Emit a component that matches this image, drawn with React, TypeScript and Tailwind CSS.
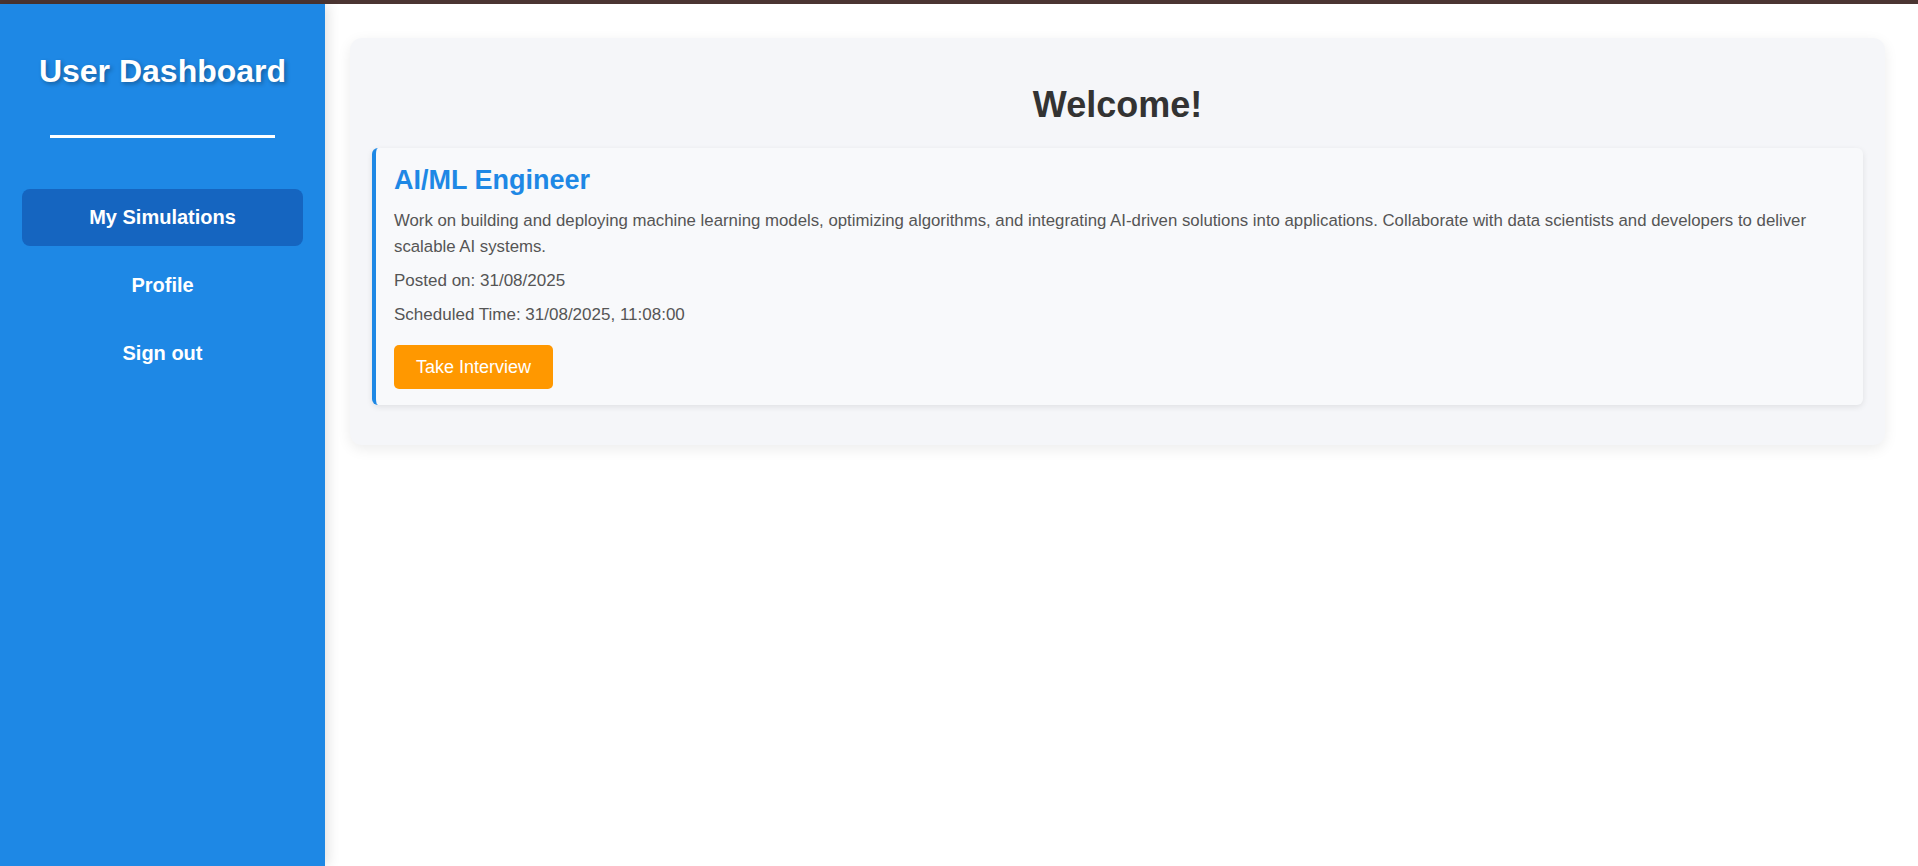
import React from "react";

const navItems = [
  { label: "My Simulations", active: true },
  { label: "Profile", active: false },
  { label: "Sign out", active: false },
];

// card data for the single scheduled simulation
const simulation = {
  title: "AI/ML Engineer",
  description:
    "Work on building and deploying machine learning models, optimizing algorithms, and integrating AI-driven solutions into applications. Collaborate with data scientists and developers to deliver scalable AI systems.",
  posted: "31/08/2025",
  scheduled: "31/08/2025, 11:08:00",
};

function Sidebar() {
  return (
    <aside className="relative z-10 flex w-[325px] shrink-0 flex-col bg-[#1e88e5] px-[22px] pt-[49px] shadow-[3px_0_12px_rgba(0,0,0,0.12)]">
      <h2 className="text-center text-[32px] font-bold leading-[37px] text-white [text-shadow:2px_2px_4px_rgba(0,0,0,0.3)]">
        User Dashboard
      </h2>
      <div className="mx-auto mt-[45px] h-[3px] w-[225px] bg-white" />
      <nav className="mt-[51px] flex flex-col gap-[11px]">
        {navItems.map((item) => (
          <a
            key={item.label}
            href="#"
            className={
              item.active
                ? "block rounded-lg bg-[#1565c0] py-[17px] text-center text-[20px] font-bold leading-[23px] text-white"
                : "block rounded-lg py-[17px] text-center text-[20px] font-bold leading-[23px] text-white"
            }
          >
            {item.label}
          </a>
        ))}
      </nav>
    </aside>
  );
}

function SimulationCard() {
  return (
    <div className="mt-[23px] rounded-md border-l-4 border-[#1e88e5] bg-[#f8f9fb] pb-4 pl-[18px] pr-5 pt-[17px] shadow-[0_2px_6px_rgba(0,0,0,0.09)]">
      <h3 className="mb-3 text-[27px] font-bold leading-[31px] text-[#1e88e5]">
        {simulation.title}
      </h3>
      <p className="text-[16.8px] leading-[26px] text-[#555]">
        {simulation.description}
      </p>
      <p className="mt-2 text-[17px] leading-[26px] text-[#555]">
        Posted on: {simulation.posted}
      </p>
      <p className="mt-2 text-[17px] leading-[26px] text-[#555]">
        Scheduled Time: {simulation.scheduled}
      </p>
      <button className="mt-[17px] h-[44px] rounded-[5px] bg-[#ff9800] px-[22px] text-[18px] text-white">
        Take Interview
      </button>
    </div>
  );
}

export default function App() {
  return (
    <div className="flex h-screen flex-col bg-white font-['Liberation_Sans',Arial,sans-serif]">
      <div className="h-1 shrink-0 bg-[#4b3532]" />
      <div className="flex flex-1">
        <Sidebar />
        <main className="flex-1 pl-[25px] pr-[33px] pt-[34px]">
          <section className="rounded-xl bg-[#f5f6f9] px-[22px] pb-10 pt-[46px] shadow-[0_4px_14px_rgba(0,0,0,0.08)]">
            <h1 className="text-center text-[36px] font-bold leading-[41px] text-[#333]">
              Welcome!
            </h1>
            <SimulationCard />
          </section>
        </main>
      </div>
    </div>
  );
}
